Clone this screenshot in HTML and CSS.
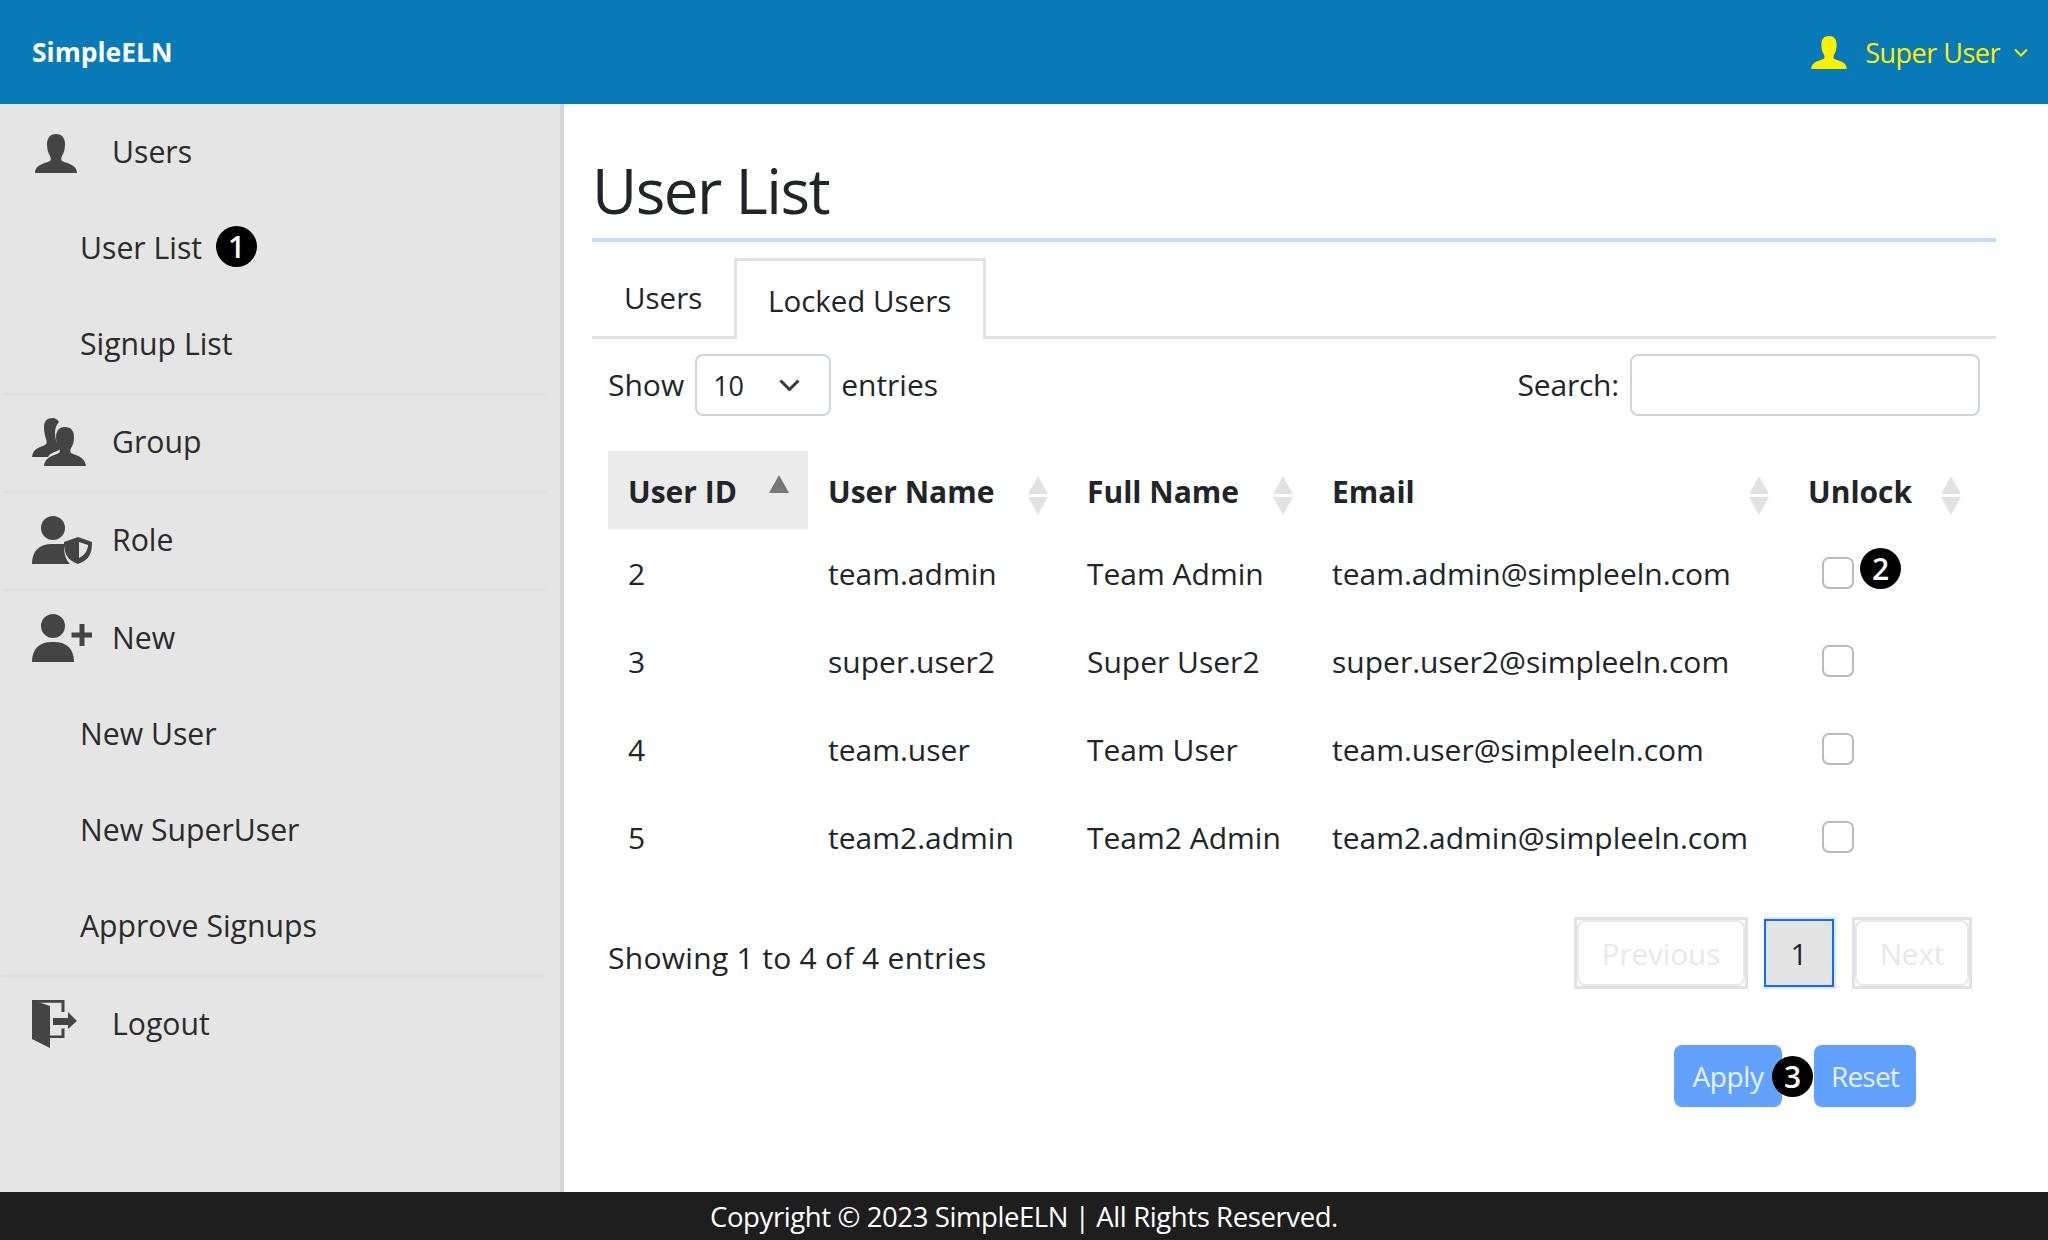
FILE: index.html
```html
<!DOCTYPE html>
<html lang="en">
<head>
  <meta charset="UTF-8">
  <meta name="viewport" content="width=device-width, initial-scale=1.0">
  <title>SimpleELN</title>
  <link rel="stylesheet" href="styles.css">
</head>
<body>
  <header class="topbar">
    <div class="brand">SimpleELN</div>
    <div class="account">
      <svg class="account-icon" viewBox="0 0 42 39"><path d="M21 0c-6 0-9 4-9 10 0 5 1 9 3 12 1 2 1 4 0 5-3 2-15 3-15 12h42c0-9-12-10-15-12-1-1-1-3 0-5 2-3 3-7 3-12 0-6-3-10-9-10z"/></svg>
      <span>Super User</span>
      <svg class="account-caret" viewBox="0 0 14 9"><path d="M1 1.500l6 6 6-6"/></svg>
    </div>
  </header>

  <div class="layout">
    <nav class="sidebar">
      <div class="nav-section">
        <div class="nav-head">
          <span class="nav-icon nav-icon-user"><svg width="42" height="39" viewBox="0 0 42 39"><path d="M21 0c-6 0-9 4-9 10 0 5 1 9 3 12 1 2 1 4 0 5-3 2-15 3-15 12h42c0-9-12-10-15-12-1-1-1-3 0-5 2-3 3-7 3-12 0-6-3-10-9-10z"/></svg></span>
          Users
        </div>
        <div class="nav-item">User List <span class="badge badge-nav">1</span></div>
        <div class="nav-item">Signup List</div>
      </div>
      <div class="nav-section">
        <div class="nav-head">
          <span class="nav-icon"><svg width="54" height="48" viewBox="0 0 54 48"><path d="M21 0c-6 0-9 3-9 9 0 5 1 9 2 12 1 3 1 5-1 6-4 2-12 3-13 12h16c2-4 7-5 11-7 1-1 1-2 0-3-2-3-4-8-4-14 0-4 1-8 4-11-2-3-4-4-6-4z"/><path d="M33 9c-6 0-9 4-9 10 0 5 1 8 3 11 1 2 1 4 0 5-3 2-14 3-15 13h42c-1-10-12-11-15-13-1-1-1-3 0-5 2-3 3-6 3-11 0-6-3-10-9-10z"/></svg></span>
          Group
        </div>
      </div>
      <div class="nav-section">
        <div class="nav-head">
          <span class="nav-icon"><svg width="60" height="48" viewBox="0 0 60 48"><circle cx="21" cy="12" r="12"/><path d="M0 48c0-13 7-20 20-20h10c2 0 4 0 6 1-1 1-2 1-4 2 0 7 2 13 6 17z"/><path fill-rule="evenodd" d="M46 21l14 5c0 10-2 18-14 22-12-4-14-12-14-22zm1 5v16c6-3 9-8 9-13z"/></svg></span>
          Role
        </div>
      </div>
      <div class="nav-section">
        <div class="nav-head">
          <span class="nav-icon"><svg width="60" height="48" viewBox="0 0 60 48"><circle cx="21" cy="12" r="12"/><path d="M0 48c0-13 7-20 20-20h2c13 0 20 7 20 20z"/><path d="M47.500 10h5v8.500h7.500v5h-7.500v8.500h-5v-8.500h-8v-5h8z"/></svg></span>
          New
        </div>
        <div class="nav-item">New User</div>
        <div class="nav-item">New SuperUser</div>
        <div class="nav-item">Approve Signups</div>
      </div>
      <div class="nav-section nav-last">
        <div class="nav-head">
          <span class="nav-icon"><svg width="45" height="48" viewBox="0 0 45 48"><path d="M0 0l18 6v42L0 39z"/><path d="M0 0h32.500v12h-3V2.700H0zM18 35.500h11.500v-7h3V38H18z"/><path d="M21 18h15v-6l9 9-9 8v-4H21z"/></svg></span>
          Logout
        </div>
      </div>
    </nav>

    <main class="content">
      <h1 class="page-title">User List</h1>

      <div class="tabs">
        <div class="tab">Users</div>
        <div class="tab tab-active">Locked Users</div>
      </div>

      <div class="panel">
        <div class="table-tools">
          <label class="length"><span class="tool-text">Show</span>
            <select class="length-select"><option>10</option></select>
            <span class="tool-text">entries</span></label>
          <label class="search"><span class="tool-text">Search:</span> <input class="search-input" type="text"></label>
        </div>

        <table class="data-table">
          <colgroup>
            <col class="col-id"><col class="col-name"><col class="col-full"><col class="col-email"><col class="col-unlock">
          </colgroup>
          <thead>
            <tr>
              <th class="sort sort-active">User ID</th>
              <th class="sort">User Name</th>
              <th class="sort">Full Name</th>
              <th class="sort">Email</th>
              <th class="sort">Unlock</th>
            </tr>
          </thead>
          <tbody>
            <tr>
              <td>2</td><td>team.admin</td><td>Team Admin</td><td>team.admin@simpleeln.com</td>
              <td><div class="unlock"><input class="check" type="checkbox"><span class="badge badge-check">2</span></div></td>
            </tr>
            <tr>
              <td>3</td><td>super.user2</td><td>Super User2</td><td>super.user2@simpleeln.com</td>
              <td><div class="unlock"><input class="check" type="checkbox"></div></td>
            </tr>
            <tr>
              <td>4</td><td>team.user</td><td>Team User</td><td>team.user@simpleeln.com</td>
              <td><div class="unlock"><input class="check" type="checkbox"></div></td>
            </tr>
            <tr>
              <td>5</td><td>team2.admin</td><td>Team2 Admin</td><td>team2.admin@simpleeln.com</td>
              <td><div class="unlock"><input class="check" type="checkbox"></div></td>
            </tr>
          </tbody>
        </table>

        <div class="table-foot">
          <div class="table-info">Showing 1 to 4 of 4 entries</div>
          <div class="pager">
            <div class="page-box page-prev"><span class="page-btn">Previous</span></div>
            <div class="page-box page-current"><span class="page-btn">1</span></div>
            <div class="page-box page-next"><span class="page-btn">Next</span></div>
          </div>
        </div>

        <div class="actions">
          <button class="btn btn-apply">Apply</button>
          <span class="badge badge-action">3</span>
          <button class="btn btn-reset">Reset</button>
        </div>
      </div>
    </main>
  </div>

  <footer class="footer">Copyright © 2023 SimpleELN | All Rights Reserved.</footer>
</body>
</html>
```

FILE: styles.css
```css
* {
  box-sizing: border-box;
}

body {
  margin: 0;
  height: 100vh;
  display: flex;
  flex-direction: column;
  overflow: hidden;
  font-family: "Open Sans", "Noto Sans", sans-serif;
  font-size: 30px;
  color: #212529;
  background: #fff;
}

.topbar {
  height: 104px;
  flex: none;
  display: flex;
  align-items: center;
  justify-content: space-between;
  padding: 0 20px 0 32px;
  background: #087ab8;
}

.brand {
  font-size: 26.500px;
  font-weight: 700;
  color: #fff;
}

.account {
  display: flex;
  align-items: center;
  font-size: 27px;
  letter-spacing: -0.5px;
  color: #fff000;
}

.account-icon {
  width: 36px;
  height: 33px;
  margin-right: 18px;
  fill: #fff000;
}

.account-caret {
  width: 14px;
  height: 9px;
  margin-left: 14px;
  fill: none;
  stroke: #fff000;
  stroke-width: 2;
}

.layout {
  flex: 1;
  display: flex;
  min-height: 0;
}

.sidebar {
  width: 564px;
  flex: none;
  padding-top: 1px;
  background: #e5e5e5;
  border-right: 4px solid #d6d6d6;
  color: #2b2b2b;
  font-size: 30.200px;
}

.nav-section {
  margin: 0 14px 0 2px;
  border-bottom: 2px solid #e0e0e0;
}

.nav-last {
  border-bottom: 0;
}

.nav-head,
.nav-item {
  height: 96px;
  display: flex;
  align-items: center;
  padding-bottom: 3px;
}

.nav-head {
  padding-left: 30px;
}

.nav-item {
  padding-left: 78px;
}

.nav-icon {
  width: 80px;
  flex: none;
  display: flex;
  fill: #444;
}

.nav-icon-user {
  margin-top: 3px;
  padding-left: 3px;
}

.badge {
  width: 41px;
  height: 41px;
  flex: none;
  display: flex;
  align-items: center;
  justify-content: center;
  border-radius: 50%;
  background: #000;
  color: #fff;
  font-size: 30px;
  font-weight: 600;
}

.badge-nav {
  margin: -3px 0 0 14px;
}

.badge-check {
  margin: -9px 0 0 6px;
}

.badge-action {
  position: relative;
  margin: 0 1px 0 -10px;
}

.content {
  flex: 1;
  min-width: 0;
  padding: 0 52px 0 28px;
}

.page-title {
  margin: 0;
  height: 138px;
  padding-top: 47px;
  font-size: 62px;
  font-weight: 400;
  line-height: 78px;
  letter-spacing: -1.500px;
  border-bottom: 4px solid #c2dbfd;
}

.tabs {
  display: flex;
  height: 81px;
  margin-top: 16px;
  border-bottom: 3px solid #dee2e6;
  font-size: 29.500px;
}

.tab {
  width: 142px;
  padding: 19px 0 0 32px;
}

.tab-active {
  width: 252px;
  height: 81px;
  padding: 19px 0 0 31px;
  background: #fff;
  border: 3px solid #dee2e6;
  border-bottom: 0;
}

.panel {
  padding: 0 16px;
}

.table-tools {
  display: flex;
  align-items: center;
  justify-content: space-between;
  margin-top: 15px;
  height: 62px;
}

.length,
.search {
  display: flex;
  align-items: center;
  gap: 11px;
}

.length {
  gap: 10px;
}

.tool-text {
  margin-bottom: 2px;
}

.search .tool-text {
  letter-spacing: -0.2px;
}

.length-select {
  width: 136px;
  height: 62px;
  margin-left: 1px;
  padding-left: 16px;
  appearance: none;
  background: #fff url("data:image/svg+xml,%3Csvg xmlns='http://www.w3.org/2000/svg' viewBox='0 0 21 12'%3E%3Cpath d='M1.500 1.500l9 9 9-9' fill='none' stroke='%23343a40' stroke-width='3'/%3E%3C/svg%3E") no-repeat right 29px center / 21px 12px;
  border: 2.500px solid #ced4da;
  border-radius: 8px;
  font: inherit;
  font-size: 27px;
  color: #212529;
}

.search-input {
  width: 350px;
  height: 62px;
  border: 2.500px solid #ced4da;
  border-radius: 8px;
}

.data-table {
  width: 1372px;
  margin-top: 35px;
  table-layout: fixed;
  border-collapse: collapse;
}

.col-id { width: 200px; }
.col-name { width: 259px; }
.col-full { width: 245px; }
.col-email { width: 476px; }
.col-unlock { width: 192px; }

.data-table th {
  height: 78px;
  padding: 2px 20px 0;
  text-align: left;
  font-weight: 700;
}

.data-table td {
  height: 88px;
  padding: 0 20px;
  white-space: nowrap;
}

.sort {
  position: relative;
}

.sort::before,
.sort::after {
  content: "";
  position: absolute;
  right: 19px;
  border-left: 10.500px solid transparent;
  border-right: 10.500px solid transparent;
}

.sort::before {
  top: 25px;
  border-bottom: 18px solid #e2e2e2;
}

.sort::after {
  top: 46px;
  border-top: 18px solid #e2e2e2;
}

.sort-active {
  background: #ebebeb;
}

.sort-active::before {
  top: 24px;
  border-bottom-color: #777;
}

.sort-active::after {
  display: none;
}

.unlock {
  display: flex;
  align-items: center;
  padding-left: 14px;
}

.check {
  width: 32px;
  height: 32px;
  margin: 0;
  appearance: none;
  background: #fff;
  border: 2.500px solid #bbb;
  border-radius: 7px;
}

.table-foot {
  display: flex;
  align-items: center;
  justify-content: space-between;
  margin-top: 36px;
  padding-right: 8px;
}

.table-info {
  padding-top: 8px;
  letter-spacing: 0.3px;
}

.pager {
  display: flex;
  gap: 16px;
}

.page-box {
  height: 72px;
  border: 3px solid #dfe1e4;
  color: #e8e8e8;
  font-size: 29.500px;
}

.page-btn {
  height: 100%;
  display: flex;
  align-items: center;
  justify-content: center;
  border: 2px solid #e6e8ea;
  border-radius: 8px;
}

.page-prev { width: 174px; }
.page-next { width: 120px; }

.page-current {
  width: 72px;
  border-width: 2px 2px 2px 0;
  border-color: #e6e8ea;
  color: #212529;
}

.page-current .page-btn {
  background: #e4e4e4;
  border: 2.500px solid #0d6efd;
  border-radius: 0;
}

.actions {
  display: flex;
  align-items: center;
  justify-content: flex-end;
  margin-top: 56px;
  padding-right: 64px;
}

.btn {
  height: 62px;
  padding: 0;
  background: #62a2fe;
  border: 0;
  border-radius: 8px;
  color: #e8f1ff;
  font: inherit;
  font-size: 28px;
  letter-spacing: -0.4px;
}

.btn-apply { width: 108px; }

.btn-reset {
  width: 102px;
  letter-spacing: -0.8px;
}

.footer {
  height: 48px;
  flex: none;
  display: flex;
  align-items: center;
  justify-content: center;
  background: #1e1e1e;
  color: #fff;
  font-size: 27.500px;
  letter-spacing: -0.4px;
}
```
